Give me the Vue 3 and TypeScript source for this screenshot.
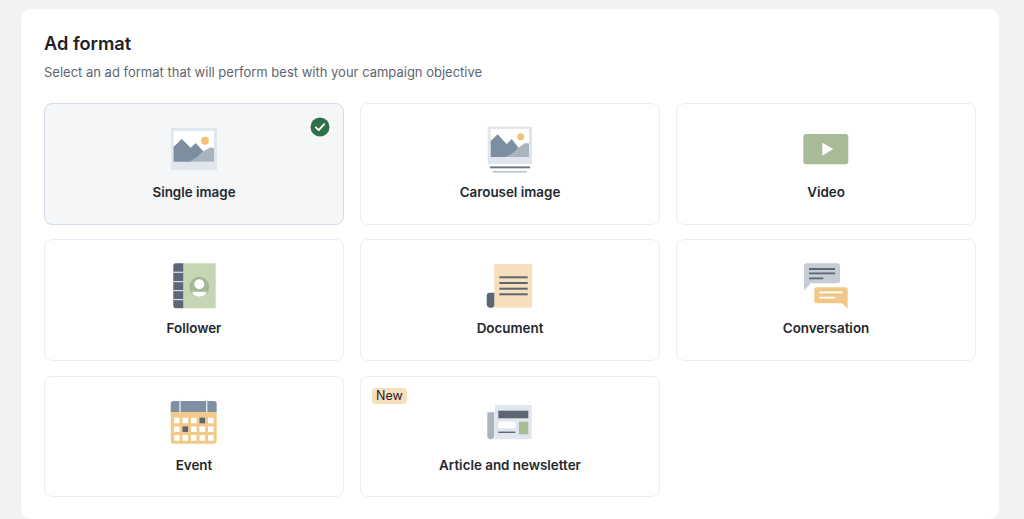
<script setup lang="ts">
interface Format {
  id: string
  label: string
  selected?: boolean
  isNew?: boolean
}

const formats: Format[] = [
  { id: 'single', label: 'Single image', selected: true },
  { id: 'carousel', label: 'Carousel image' },
  { id: 'video', label: 'Video' },
  { id: 'follower', label: 'Follower' },
  { id: 'document', label: 'Document' },
  { id: 'conversation', label: 'Conversation' },
  { id: 'event', label: 'Event' },
  { id: 'article', label: 'Article and newsletter', isNew: true },
]

const calendarCells: { x: number; y: number; dark: boolean }[] = []
for (let row = 0; row < 3; row++) {
  for (let col = 0; col < 5; col++) {
    calendarCells.push({
      x: 10 + col * 8.5,
      y: 21.7 + row * 8.7,
      dark: (row === 0 && col === 3) || (row === 1 && col === 1),
    })
  }
}
const docLines = [18.3, 24, 29.7, 35.3]
const spineGaps = [12.7, 22, 31, 40]
</script>

<template>
  <main class="page">
    <section class="panel">
      <h1 class="title">Ad format</h1>
      <p class="subtitle">Select an ad format that will perform best with your campaign objective</p>
      <div class="grid">
        <button
          v-for="f in formats"
          :key="f.id"
          type="button"
          class="card"
          :class="{ selected: f.selected }"
        >
          <span v-if="f.isNew" class="badge">New</span>
          <svg v-if="f.selected" class="check" viewBox="0 0 20 20" aria-hidden="true">
            <circle cx="10" cy="10" r="9.5" fill="#2f6f4a" />
            <path d="M5.8 10.3l2.9 2.9 5.5-6" fill="none" stroke="#fff" stroke-width="1.9" stroke-linecap="round" stroke-linejoin="round" />
          </svg>

          <svg class="icon" viewBox="0 0 60 50" aria-hidden="true">
            <template v-if="f.id === 'single'">
              <rect x="7" y="5" width="46" height="42" fill="#e1e6ed" />
              <rect x="9.5" y="8" width="40.5" height="30.7" fill="#fff" />
              <path d="M9.5 38.7V24L17.7 16l9 8.7 5-4.7 8 8.7-11 10z" fill="#7d8ea1" />
              <path d="M25 38.7l8-4.5 5-5 8-4.7 4 .5v13.7z" fill="#a9b4bd" />
              <circle cx="41" cy="17.7" r="4" fill="#f2c27a" />
            </template>

            <template v-else-if="f.id === 'carousel'">
              <rect x="7.7" y="3.7" width="44.3" height="37.3" fill="#e1e6ed" />
              <rect x="10.7" y="6" width="38.3" height="28" fill="#fff" />
              <path d="M10.7 34V18L17.7 11.3l9 10 5-5.3 7 9-10 9z" fill="#7d8ea1" />
              <path d="M25 34l8-3.5 5-5.5 7-5 4 .5V34z" fill="#a9b4bd" />
              <circle cx="40.7" cy="13.7" r="3.5" fill="#f2c27a" />
              <rect x="10" y="43.4" width="40" height="1.9" fill="#6b7787" />
              <rect x="12.7" y="48" width="34" height="1.5" fill="#b6bfc9" />
            </template>

            <template v-else-if="f.id === 'video'">
              <rect x="7.3" y="11" width="45" height="30.3" rx="3" fill="#a7bb97" />
              <path d="M26.3 19.7L37.3 26l-11 6.7z" fill="#fff" />
            </template>

            <template v-else-if="f.id === 'follower'">
              <path d="M19.3 4.3H51.7V49.3H19.3z" fill="#c5d6b5" />
              <path d="M12 4.3h7.3v45H12a2.7 2.7 0 0 1-2.7-2.7V7a2.7 2.7 0 0 1 2.7-2.7z" fill="#5c6675" />
              <rect v-for="y in spineGaps" :key="y" x="9.3" :y="y" width="10" height="1.2" fill="#d8dee5" />
              <circle cx="35.3" cy="27.7" r="10" fill="#a3b893" />
              <circle cx="35.3" cy="25.3" r="5" fill="#fff" />
              <path d="M28.3 32.7h14a7 5 0 0 1-14 0z" fill="#fff" />
            </template>

            <template v-else-if="f.id === 'document'">
              <path d="M14.3 5H52.3V45.7a3 3 0 0 1-3 3H14.3z" fill="#f8dfbb" />
              <path d="M9.7 33.7h4.6v12a3 3 0 0 1-3.8 3 3.8 3.8 0 0 1-3.8-3V36.7a3 3 0 0 1 3-3z" fill="#5c6675" />
              <rect v-for="y in docLines" :key="y" x="19.3" :y="y - 1" width="28.4" height="2" fill="#5c6675" />
            </template>

            <template v-else-if="f.id === 'conversation'">
              <path d="M10.5 4.3h31a2.5 2.5 0 0 1 2.5 2.5v15a2.5 2.5 0 0 1-2.5 2.5H14.7L8 31.7V6.8a2.5 2.5 0 0 1 2.5-2.5z" fill="#c5ccd6" />
              <path d="M13 10H39M13 14.3H39M13 19.3H27.3" stroke="#5c6675" stroke-width="1.8" fill="none" />
              <path d="M21 28.3h28a2.7 2.7 0 0 1 2.7 2.7v18.3l-6-5H21a2.7 2.7 0 0 1-2.7-2.7V31a2.7 2.7 0 0 1 2.7-2.7z" fill="#f2c888" />
              <path d="M23.3 33.3H46.7M23.3 38.7H39" stroke="#fff" stroke-width="1.8" fill="none" />
            </template>

            <template v-else-if="f.id === 'event'">
              <path d="M6.7 16H52.7V45a2.7 2.7 0 0 1-2.7 2.7H9.4A2.7 2.7 0 0 1 6.7 45z" fill="#f2c988" />
              <path d="M9.7 5H49.7a3 3 0 0 1 3 3v8H6.7V8a3 3 0 0 1 3-3z" fill="#7f90a3" />
              <path d="M16 3.3V16.7M42.7 3.3V16.7" stroke="#e1e6ed" stroke-width="1.4" fill="none" />
              <rect
                v-for="c in calendarCells"
                :key="`${c.x}-${c.y}`"
                :x="c.x"
                :y="c.y"
                width="5.6"
                height="5.6"
                :fill="c.dark ? '#5c6675' : '#fff'"
              />
            </template>

            <template v-else-if="f.id === 'article'">
              <rect x="15" y="9" width="36.7" height="34.3" rx="1" fill="#e1e6ed" />
              <path d="M7.3 16.3h7v23.5a3.5 3.5 0 0 1-7 0z" fill="#a9b4bf" />
              <rect x="18.3" y="14.7" width="30" height="7.6" fill="#5c6675" />
              <rect x="18.3" y="25.7" width="17.4" height="6.6" fill="#fff" />
              <rect x="39" y="25.7" width="9.3" height="12.6" fill="#a7bb97" />
              <rect x="18.3" y="35.6" width="17" height="1.4" fill="#5c6675" />
            </template>
          </svg>

          <span class="label">{{ f.label }}</span>
        </button>
      </div>
    </section>
  </main>
</template>

<style>
html,
body {
  margin: 0;
  background: #f3f2f0;
}
</style>

<style scoped>
.page {
  box-sizing: border-box;
  height: 519px;
  overflow: hidden;
  padding: 9px 25px 0 21px;
  font-family: Inter, "Liberation Sans", sans-serif;
}

.panel {
  box-sizing: border-box;
  height: 510px;
  padding: 22px 23px 0;
  background: #fff;
  border-radius: 10px;
}

.title {
  margin: 0;
  font-size: 18.2px;
  line-height: 24px;
  font-weight: 600;
  color: #1f2328;
}

.subtitle {
  margin: 7px 0 0;
  font-size: 13px;
  line-height: 20px;
  font-weight: 400;
  color: #5e6670;
}

.grid {
  display: grid;
  grid-template-columns: repeat(3, 300px);
  grid-auto-rows: 121.5px;
  column-gap: 16px;
  row-gap: 14.75px;
  margin-top: 21px;
}

.card {
  position: relative;
  box-sizing: border-box;
  display: flex;
  flex-direction: column;
  align-items: center;
  padding: 20px 0 0;
  background: #fff;
  border: 1px solid #eaedf0;
  border-radius: 8px;
  font-family: inherit;
}

.card.selected {
  background: #f4f6f8;
  border-color: #d5dce8;
}

.icon {
  display: block;
  width: 60px;
  height: 50px;
  margin-top: -1px;
}

.label {
  margin-top: 10px;
  font-size: 13.4px;
  line-height: 18px;
  font-weight: 600;
  color: #24282d;
}

.check {
  position: absolute;
  top: 13px;
  right: 13px;
  width: 20px;
  height: 20px;
}

.badge {
  position: absolute;
  top: 11px;
  left: 11px;
  padding: 0 4px;
  height: 16.5px;
  line-height: 16.5px;
  font-size: 12.5px;
  font-weight: 400;
  color: #1f2328;
  background: #f8dfbb;
  border-radius: 4px;
}
</style>
